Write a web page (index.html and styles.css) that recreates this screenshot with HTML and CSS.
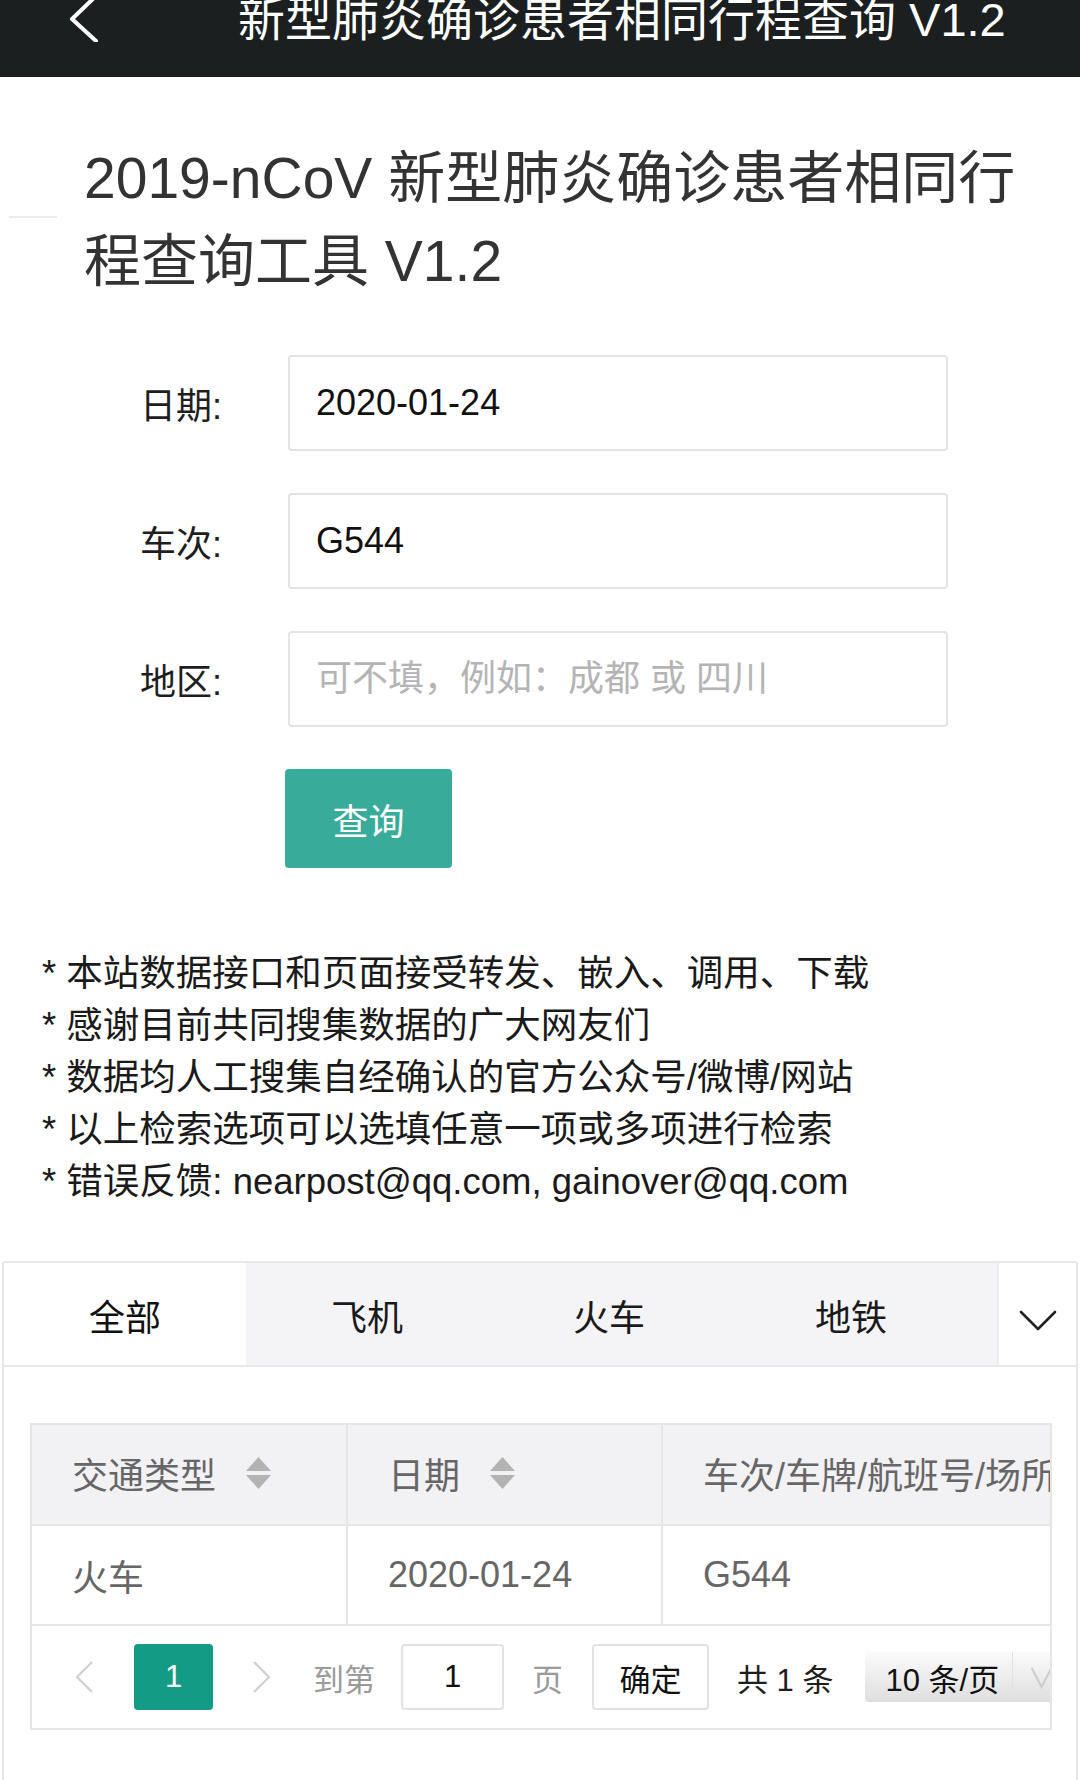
FILE: index.html
```html
<!DOCTYPE html>
<html lang="zh-CN">
<head>
<meta charset="utf-8">
<title>2019-nCoV 新型肺炎确诊患者相同行程查询工具 V1.2</title>
<link rel="stylesheet" href="styles.css">
</head>
<body>
<header class="topbar">
  <svg class="back" viewBox="0 0 30 44" width="30" height="44" aria-hidden="true">
    <polyline points="28,-2 4,21 28,43" fill="none" stroke="#ffffff" stroke-width="4" stroke-linecap="round" stroke-linejoin="round"/>
  </svg>
  <div class="topbar-title">新型肺炎确诊患者相同行程查询 V1.2</div>
</header>

<section class="hero">
  <div class="hero-rule"></div>
  <h1 class="hero-title">2019-nCoV 新型肺炎确诊患者相同行程查询工具 V1.2</h1>
</section>

<form class="form" onsubmit="return false">
  <div class="field">
    <label class="field-label">日期:</label>
    <input class="field-input" type="text" value="2020-01-24">
  </div>
  <div class="field">
    <label class="field-label">车次:</label>
    <input class="field-input" type="text" value="G544">
  </div>
  <div class="field">
    <label class="field-label">地区:</label>
    <input class="field-input" type="text" placeholder="可不填，例如：成都 或 四川">
  </div>
  <div class="actions">
    <button class="btn-primary" type="button">查询</button>
  </div>
</form>

<ul class="notes">
  <li>* 本站数据接口和页面接受转发、嵌入、调用、下载</li>
  <li>* 感谢目前共同搜集数据的广大网友们</li>
  <li>* 数据均人工搜集自经确认的官方公众号/微博/网站</li>
  <li>* 以上检索选项可以选填任意一项或多项进行检索</li>
  <li>* 错误反馈: nearpost@qq.com, gainover@qq.com</li>
</ul>

<section class="card">
  <div class="tabs">
    <div class="tab-list">
      <div class="tab active">全部</div>
      <div class="tab">飞机</div>
      <div class="tab">火车</div>
      <div class="tab">地铁</div>
    </div>
    <div class="tab-more">
      <svg class="tab-chevron" viewBox="0 0 38 22" width="38" height="22" aria-hidden="true">
        <polyline points="2,2 19,19 36,2" fill="none" stroke="#222" stroke-width="2.6" stroke-linecap="round" stroke-linejoin="round"/>
      </svg>
    </div>
  </div>

  <div class="card-body">
    <div class="table-wrap">
      <table class="data-table">
        <colgroup>
          <col class="col-a"><col class="col-b"><col class="col-c">
        </colgroup>
        <thead>
          <tr>
            <th><span class="th-inner">交通类型<svg class="sort" viewBox="0 0 25 32" width="25" height="32" aria-hidden="true"><polygon points="0,14 12.5,0 25,14" fill="#b3b3b3"/><polygon points="0,18 25,18 12.5,32" fill="#b3b3b3"/></svg></span></th>
            <th><span class="th-inner">日期<svg class="sort" viewBox="0 0 25 32" width="25" height="32" aria-hidden="true"><polygon points="0,14 12.5,0 25,14" fill="#b3b3b3"/><polygon points="0,18 25,18 12.5,32" fill="#b3b3b3"/></svg></span></th>
            <th><span class="th-inner">车次/车牌/航班号/场所</span></th>
          </tr>
        </thead>
        <tbody>
          <tr>
            <td>火车</td>
            <td>2020-01-24</td>
            <td>G544</td>
          </tr>
        </tbody>
      </table>

      <div class="pager">
        <svg class="pager-arrow prev" viewBox="0 0 20 32" width="20" height="32" aria-hidden="true">
          <polyline points="18,1 3,16 18,31" fill="none" stroke="#cfcfcf" stroke-width="2.2" stroke-linejoin="round"/>
        </svg>
        <span class="page-current">1</span>
        <svg class="pager-arrow next" viewBox="0 0 20 32" width="20" height="32" aria-hidden="true">
          <polyline points="2,1 17,16 2,31" fill="none" stroke="#cfcfcf" stroke-width="2.2" stroke-linejoin="round"/>
        </svg>
        <span class="pager-muted goto">到第</span>
        <span class="page-input">1</span>
        <span class="pager-muted page-unit">页</span>
        <span class="page-btn">确定</span>
        <span class="page-total">共 1 条</span>
        <span class="page-size">
          <span class="page-size-text">10 条/页</span>
          <span class="page-size-arrow">∨</span>
        </span>
      </div>
    </div>
  </div>
</section>
</body>
</html>
```

FILE: styles.css
```css
* {
  box-sizing: border-box;
}

html, body {
  margin: 0;
  padding: 0;
  background: #ffffff;
}

body {
  width: 1080px;
  height: 1780px;
  overflow: hidden;
  font-family: "Liberation Sans", "Noto Sans CJK SC", sans-serif;
  color: #222222;
}

/* ---------- top bar ---------- */
.topbar {
  height: 77px;
  background: #1b1f1f;
  display: flex;
  align-items: flex-start;
  overflow: hidden;
}

.back {
  flex: none;
  margin-left: 68px;
  margin-top: -2px;
}

.topbar-title {
  margin: -8px 0 0 140px;
  font-size: 47px;
  line-height: 56px;
  color: #ffffff;
  white-space: nowrap;
}

/* ---------- hero title ---------- */
.hero {
  display: flex;
  align-items: flex-start;
  margin-top: 60px;
}

.hero-rule {
  flex: none;
  width: 48px;
  height: 2px;
  background: #ececec;
  margin: 79px 27px 0 9px;
}

.hero-title {
  margin: 0;
  width: 950px;
  font-size: 57px;
  line-height: 83px;
  font-weight: normal;
  color: #333333;
}

/* ---------- form ---------- */
.form {
  margin-top: 52px;
  display: flex;
  flex-direction: column;
  gap: 42px;
}

.field {
  display: flex;
  align-items: center;
}

.field-label {
  flex: none;
  width: 288px;
  padding-left: 140px;
  font-size: 36px;
  color: #1e1e1e;
}

.field-input {
  width: 660px;
  height: 96px;
  border: 2px solid #e4e4e4;
  border-radius: 4px;
  padding: 0 26px;
  font-family: "Liberation Sans", "Noto Sans CJK SC", sans-serif;
  font-size: 36px;
  color: #111111;
  background: #ffffff;
  outline: none;
}

.field-input::placeholder {
  color: #b4b4b4;
}

.actions {
  padding-left: 285px;
}

.btn-primary {
  width: 167px;
  height: 99px;
  border: none;
  border-radius: 4px;
  background: #38ab9b;
  color: #ffffff;
  font-family: "Liberation Sans", "Noto Sans CJK SC", sans-serif;
  font-size: 36px;
  padding: 0;
}

/* ---------- notes ---------- */
.notes {
  list-style: none;
  margin: 80px 0 0;
  padding: 0 0 0 42px;
  font-size: 36.5px;
  line-height: 52px;
  color: #1a1a1a;
}

/* ---------- card / tabs ---------- */
.card {
  margin: 53px 2px 0;
  border: 2px solid #e8e8e8;
  border-bottom: none;
  border-radius: 3px 3px 0 0;
}

.tabs {
  display: flex;
  height: 104px;
  border-bottom: 2px solid #e8e8e8;
}

.tab-list {
  flex: 1;
  display: flex;
  background: #f4f3f6;
}

.tab {
  width: 242px;
  display: flex;
  align-items: center;
  justify-content: center;
  font-size: 36px;
  color: #1a1a1a;
  padding-top: 2px;
}

.tab.active {
  background: #ffffff;
  color: #111111;
}

.tab-more {
  flex: none;
  width: 79px;
  border-left: 2px solid #ececec;
  display: flex;
  align-items: center;
  justify-content: center;
  padding-top: 14px;
  background: #ffffff;
}

.card-body {
  padding: 56px 24px 80px 26px;
}

/* ---------- table ---------- */
.table-wrap {
  width: 1022px;
  border: 2px solid #e6e6e6;
  overflow: hidden;
}

.data-table {
  width: 1050px;
  table-layout: fixed;
  border-collapse: collapse;
}

.col-a { width: 315px; }
.col-b { width: 315px; }
.col-c { width: 420px; }

.data-table th,
.data-table td {
  height: 100px;
  padding: 0 0 0 40px;
  text-align: left;
  font-weight: normal;
  font-size: 36px;
  color: #666666;
  white-space: nowrap;
  overflow: hidden;
  border-right: 2px solid #e6e6e6;
  border-bottom: 2px solid #e6e6e6;
}

.data-table th {
  background: #f2f1f4;
  padding-bottom: 4px;
}

.data-table td {
  background: #ffffff;
}

.th-inner {
  display: inline-flex;
  align-items: center;
}

.sort {
  margin-left: 30px;
  flex: none;
}

/* ---------- pager ---------- */
.pager {
  height: 102px;
  display: flex;
  align-items: center;
  white-space: nowrap;
  font-size: 31px;
  color: #1e1e1e;
}

.pager-arrow {
  flex: none;
}

.pager-arrow.prev {
  margin-left: 42px;
}

.page-current {
  flex: none;
  margin-left: 40px;
  width: 79px;
  height: 66px;
  border-radius: 4px;
  background: #149b86;
  color: #ffffff;
  display: flex;
  align-items: center;
  justify-content: center;
}

.pager-arrow.next {
  margin-left: 39px;
}

.pager-muted {
  color: #9a9a9a;
}

.goto {
  margin-left: 41px;
}

.page-input {
  flex: none;
  margin-left: 26px;
  width: 103px;
  height: 66px;
  border: 2px solid #e2e2e2;
  border-radius: 4px;
  display: flex;
  align-items: center;
  justify-content: center;
  color: #111111;
}

.page-unit {
  margin-left: 28px;
}

.page-btn {
  flex: none;
  margin-left: 29px;
  width: 117px;
  height: 66px;
  border: 2px solid #e2e2e2;
  border-radius: 4px;
  display: flex;
  align-items: center;
  justify-content: center;
  color: #111111;
}

.page-total {
  margin-left: 28px;
}

.page-size {
  flex: none;
  margin-left: 32px;
  width: 200px;
  height: 50px;
  border-radius: 4px;
  background: linear-gradient(#fbfbfb, #dedede);
  display: flex;
  align-items: center;
  color: #111111;
}

.page-size-text {
  padding-left: 20px;
  width: 148px;
  height: 100%;
  display: flex;
  align-items: center;
  border-right: 1px solid #e2e2e2;
}

.page-size-arrow {
  padding-left: 14px;
  color: #cccccc;
  font-size: 28px;
}
```
